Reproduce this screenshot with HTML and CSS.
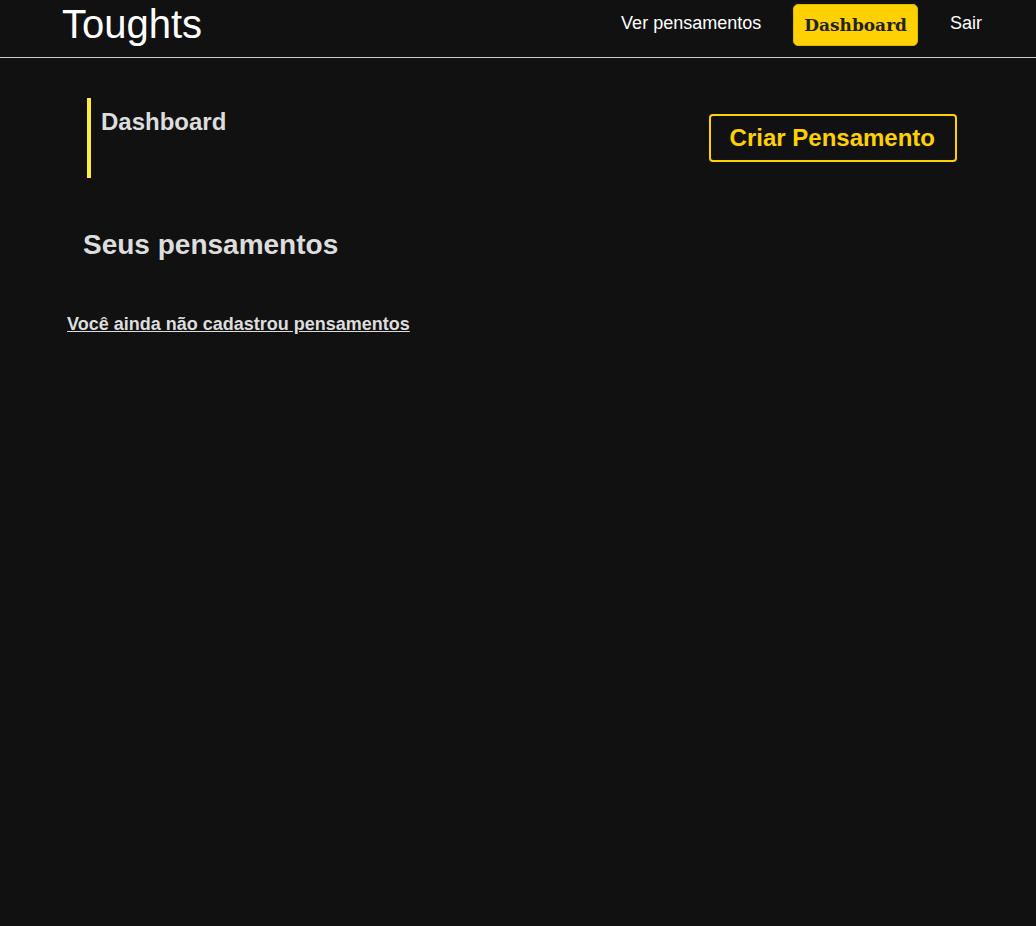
FILE: index.html
```html
<!DOCTYPE html>
<html lang="pt">
<head>
<meta charset="utf-8">
<title>Toughts</title>
<link rel="stylesheet" href="styles.css">
</head>
<body>
<header class="navbar">
  <a class="logo" href="#">Toughts</a>
  <nav class="nav-links">
    <a class="nav-link" href="#">Ver pensamentos</a>
    <a class="nav-btn" href="#">Dashboard</a>
    <a class="nav-link" href="#">Sair</a>
  </nav>
</header>
<main class="container">
  <section class="title-row">
    <div class="title-box">
      <h1>Dashboard</h1>
    </div>
    <a class="create-btn" href="#">Criar Pensamento</a>
  </section>
  <h2 class="section-title">Seus pensamentos</h2>
  <p class="empty"><a href="#">Você ainda não cadastrou pensamentos</a></p>
</main>
</body>
</html>
```
FILE: styles.css
```css
* { box-sizing: border-box; }
html, body {
  margin: 0;
  padding: 0;
  background: #111111;
  height: 100%;
}
body {
  font-family: "Liberation Sans", Arial, sans-serif;
  color: #dddddd;
}
a { text-decoration: none; }
.navbar {
  display: flex;
  align-items: center;
  justify-content: space-between;
  height: 58px;
  padding: 0 54px 0 62px;
  border-bottom: 1px solid #cccccc;
}
.logo {
  color: #ffffff;
  font-size: 40px;
  line-height: 48px;
  margin-top: -10px;
}
.nav-links {
  display: flex;
  align-items: center;
  gap: 32px;
  margin-top: -8px;
}
.nav-link {
  color: #ffffff;
  font-size: 18px;
  margin-top: -2px;
}
.nav-btn {
  background: #ffd100;
  color: #222222;
  font-family: "DejaVu Serif", Georgia, serif;
  font-weight: bold;
  font-size: 17px;
  padding: 0 10px;
  height: 42px;
  line-height: 41px;
  border-radius: 5px;
  border: 1px solid #e0b800;
}
.container {
  padding: 0 62px 0 66px;
}
.title-row {
  display: flex;
  justify-content: space-between;
  align-items: flex-start;
  margin-top: 40px;
  padding-left: 21px;
  padding-right: 17px;
}
.title-box {
  border-left: 4px solid #ffeb3b;
  height: 80px;
  padding-left: 10px;
}
.title-box h1 {
  margin: 10px 0 0;
  font-size: 24px;
  line-height: 28px;
  font-weight: bold;
  color: #dddddd;
}
.create-btn {
  margin-top: 16px;
  border: 2px solid #ffd100;
  border-radius: 4px;
  color: #ffd100;
  font-weight: bold;
  font-size: 24px;
  height: 48px;
  line-height: 44px;
  padding: 0 20px 0 19px;
}
.section-title {
  margin: 51px 0 0 17px;
  font-size: 28px;
  line-height: 32px;
  font-weight: bold;
  color: #dddddd;
}
.empty {
  margin: 51px 0 0 1px;
  font-size: 18px;
  line-height: 24px;
  font-weight: bold;
}
.empty a {
  color: #dddddd;
  text-decoration: underline;
}
```
